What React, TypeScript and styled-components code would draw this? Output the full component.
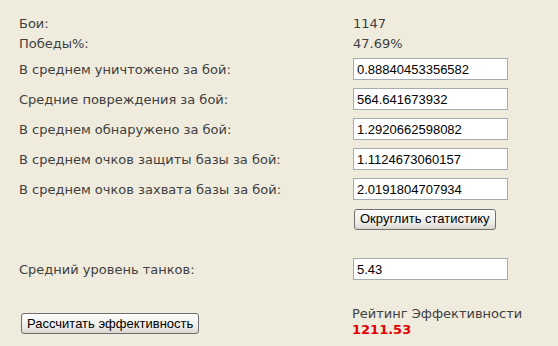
import { createGlobalStyle } from "styled-components";
import styled from "styled-components";

const GlobalStyle = createGlobalStyle`
  html, body {
    margin: 0;
    padding: 0;
    background: #efecde;
  }
`;

const stats = [
  { label: "В среднем уничтожено за бой:", value: "0.88840453356582" },
  { label: "Средние повреждения за бой:", value: "564.641673932" },
  { label: "В среднем обнаружено за бой:", value: "1.2920662598082" },
  { label: "В среднем очков защиты базы за бой:", value: "1.1124673060157" },
  { label: "В среднем очков захвата базы за бой:", value: "2.0191804707934" },
];

const App = () => {
  return (
    <Page>
      <GlobalStyle />
      <TextRow>
        <span>Бои:</span>
        <span>1147</span>
      </TextRow>
      <TextRow>
        <span>Победы%:</span>
        <span>47.69%</span>
      </TextRow>
      {stats.map((s) => (
        <FieldRow key={s.label}>
          <Label>{s.label}</Label>
          <Field defaultValue={s.value} />
        </FieldRow>
      ))}
      <FieldRow>
        <span />
        <Button $shift={1}>Округлить статистику</Button>
      </FieldRow>
      <FieldRow $gap={20}>
        <Label>Средний уровень танков:</Label>
        <Field defaultValue="5.43" />
      </FieldRow>
      <Bottom>
        <Button $shift={2} $top={7}>
          Рассчитать эффективность
        </Button>
        <Rating>
          <span>Рейтинг Эффективности</span>
          <Score>1211.53</Score>
        </Rating>
      </Bottom>
    </Page>
  );
};

const Page = styled.div`
  width: 558px;
  height: 346px;
  box-sizing: border-box;
  padding: 14px 0 0 19px;
  font-family: "DejaVu Sans", Verdana, sans-serif;
  font-size: 13px;
  color: #404040;
  overflow: hidden;
`;

const TextRow = styled.div`
  display: grid;
  grid-template-columns: 334px 1fr;
  height: 20px;
  line-height: 20px;
`;

const FieldRow = styled.div<{ $gap?: number }>`
  display: grid;
  grid-template-columns: 334px 155px;
  align-items: center;
  height: 30px;
  margin-top: ${(p) => (p.$gap ? `${p.$gap}px` : "0")};
`;

const Label = styled.span`
  white-space: nowrap;
`;

const Field = styled.input`
  box-sizing: border-box;
  width: 155px;
  height: 22px;
  border: 1px solid #a5acb2;
  background: #fff;
  padding: 1px 3px 0;
  font-family: "Liberation Sans", Arial, sans-serif;
  font-size: 13px;
  color: #000;
  outline: none;
`;

const Button = styled.button<{ $shift?: number; $top?: number }>`
  justify-self: start;
  align-self: ${(p) => (p.$top ? "start" : "center")};
  margin-left: ${(p) => p.$shift ?? 0}px;
  margin-top: ${(p) => p.$top ?? 0}px;
  height: 21px;
  padding: 0 5px;
  border: 1px solid #6f6f6f;
  border-radius: 3px;
  background: linear-gradient(#fdfdfb, #ecebe6 70%, #d9d7cf);
  font-family: "Liberation Sans", Arial, sans-serif;
  font-size: 13px;
  color: #000;
  line-height: 18px;
`;

const Bottom = styled.div`
  display: grid;
  grid-template-columns: 333px 1fr;
  margin-top: 22px;
`;

const Rating = styled.div`
  display: flex;
  flex-direction: column;
  line-height: 16px;
`;

const Score = styled.span`
  color: #e00000;
  font-weight: bold;
`;

export default App;
